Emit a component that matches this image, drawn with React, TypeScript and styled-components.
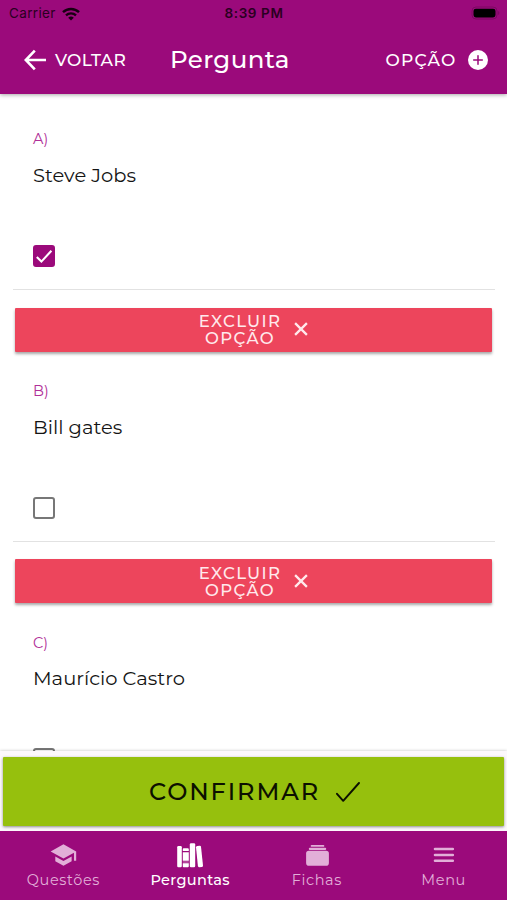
import React from 'react';
import styled, { createGlobalStyle, css } from 'styled-components';

const PURPLE = '#9b0a7b';

const GlobalStyle = createGlobalStyle`
  *, *::before, *::after { box-sizing: border-box; }
  body { margin: 0; background: #fff; }
  button { border: 0; padding: 0; background: none; font: inherit; color: inherit; }
`;

const Screen = styled.div`
  width: 507px;
  height: 900px;
  overflow: hidden;
  display: flex;
  flex-direction: column;
  background: #fff;
  color: #141414;
  font-family: Montserrat, Inter, sans-serif;
`;

const Header = styled.header`
  flex: none;
  height: 94px;
  background: ${PURPLE};
  box-shadow: 0 1px 4px rgba(0, 0, 0, 0.35);
  z-index: 1;
`;

const StatusBar = styled.div`
  display: grid;
  grid-template-columns: 1fr auto 1fr;
  align-items: center;
  height: 27px;
  padding: 0 7px 0 9px;
  color: #2a0021;
  font: 400 13.5px/27px Inter, sans-serif;
`;

const Carrier = styled.div`
  display: flex;
  align-items: center;
  gap: 6px;
  letter-spacing: 0.35px;
`;

const Clock = styled.div`
  margin-right: 1px;
  font-weight: 600;
  font-size: 13.5px;
  letter-spacing: 0.6px;
`;

const BatteryIcon = styled.svg`
  justify-self: end;
  margin-top: -1px;
`;

const Toolbar = styled.div`
  display: grid;
  grid-template-columns: 170px 1fr auto;
  align-items: center;
  height: 65px;
  padding-right: 19px;
  color: #fff;
`;

const BarButton = styled.button<{ $gap: number; $indent?: number; $track: number }>`
  display: flex;
  align-items: center;
  gap: ${({ $gap }) => $gap}px;
  padding-left: ${({ $indent = 0 }) => $indent}px;
  font-size: 17px;
  font-weight: 500;
  letter-spacing: ${({ $track }) => $track}px;
`;

const Title = styled.h1`
  margin: 0 0 2px;
  font-size: 24.5px;
  font-weight: 500;
  line-height: 30px;
  letter-spacing: 0.4px;
`;

const Content = styled.main`
  flex: none;
  height: 657px;
  padding: 30px 12px 0 13px;
  overflow: hidden;
`;

const Option = styled.section`
  height: 251.7px;
`;

const Field = styled.div`
  height: 166px;
  padding: 6.3px 20px 0;
  border-bottom: 1.5px solid #e2e2e2;
`;

const Letter = styled.div`
  height: 18px;
  line-height: 18px;
  font-size: 14.5px;
  color: #b02f98;
`;

const Answer = styled.div`
  height: 28px;
  margin: 12.7px 0 56px;
  line-height: 28px;
  font-size: 19.5px;
`;

const Checkbox = styled.div<{ $checked: boolean }>`
  display: flex;
  width: 22px;
  height: 22px;
  border: 2px solid #777;
  border-radius: 3px;
  ${({ $checked }) => $checked && css`
    border-color: ${PURPLE};
    background: ${PURPLE};
  `}
`;

const DeleteButton = styled.button`
  display: flex;
  align-items: center;
  justify-content: center;
  gap: 13px;
  width: 477px;
  height: 44px;
  margin: 17.5px 0 0 2px;
  padding-top: 1px;
  border-radius: 1px;
  background: #ed455c;
  color: #ffe9ec;
  box-shadow: 0 2px 3px rgba(0, 0, 0, 0.35);
  font-size: 16.5px;
  font-weight: 500;
  line-height: 17px;
  letter-spacing: 1.35px;
  svg { margin-bottom: 2px; }
`;

const Footer = styled.footer`
  position: relative;
  flex: none;
  height: 80px;
  padding: 6px 3px 0;
  background: #fcf8fc;
  box-shadow: 0 0 3px rgba(0, 0, 0, 0.25);
`;

const ConfirmButton = styled.button`
  display: flex;
  align-items: center;
  gap: 16px;
  width: 501px;
  height: 69px;
  padding-left: 146px;
  border-radius: 1px;
  background: #96c00d;
  color: #0c1000;
  box-shadow: 0 1px 3px rgba(0, 0, 0, 0.45);
  font-size: 24px;
  font-weight: 500;
  letter-spacing: 1.9px;
`;

const TabBar = styled.nav`
  position: relative;
  flex: 1;
  display: grid;
  grid-template-columns: repeat(4, 1fr);
  background: ${PURPLE};
`;

const Tab = styled.button<{ $active?: boolean }>`
  display: flex;
  flex-direction: column;
  align-items: center;
  padding-top: 10px;
  color: ${({ $active }) => ($active ? '#fff' : '#e2afd8')};
  font-size: 14.5px;
  line-height: 20px;
  font-weight: ${({ $active }) => ($active ? 500 : 400)};
  letter-spacing: ${({ $active }) => ($active ? 0.35 : 0.6)}px;
`;

const TabIcon = styled.svg`
  width: 28px;
  height: 28px;
  margin-bottom: 1px;
  fill: currentColor;
`;

const WifiIcon = () => (
  <svg width="18" height="14" viewBox="0 0 18 14" fill="none" stroke="#170011">
    <path d="M1 5.2a11.5 11.5 0 0 1 16 0" strokeWidth="2.4" />
    <path d="M4 8.4a7.2 7.2 0 0 1 10 0" strokeWidth="2.3" />
    <path d="M9 13.6 6.2 10.7a4.1 4.1 0 0 1 5.6 0z" fill="#170011" stroke="none" />
  </svg>
);

const Battery = () => (
  <BatteryIcon width="29" height="14" viewBox="0 0 29 14">
    <rect x="1" y="1" width="25" height="12" rx="4" fill="none" stroke="#7c0863" />
    <rect x="2.5" y="2.7" width="22" height="8.8" rx="2.4" fill="#000" />
    <path d="M27.2 5v4c1.6-.8 1.6-3.2 0-4z" fill="#7c0863" />
  </BatteryIcon>
);

const BackIcon = () => (
  <svg width="22" height="22" viewBox="0 0 22 22" fill="none" stroke="currentColor" strokeWidth="2.6">
    <path d="M10.8 1.6 1.8 11l9 9.4M2 11h20" />
  </svg>
);

const AddIcon = () => (
  <svg width="20" height="20" viewBox="0 0 20 20">
    <circle cx="10" cy="10" r="10" fill="#fff" />
    <path d="M10 5.7v8.6M5.7 10h8.6" stroke={PURPLE} strokeWidth="1.5" strokeLinecap="round" />
  </svg>
);

const CloseIcon = () => (
  <svg width="14" height="14" viewBox="0 0 14 14" stroke="currentColor" strokeWidth="2.3">
    <path d="m1.1 1.1 11.8 11.8M12.9 1.1 1.1 12.9" />
  </svg>
);

const ConfirmIcon = () => (
  <svg width="24" height="20" viewBox="0 0 24 20" fill="none" stroke="currentColor" strokeWidth="1.9" strokeLinecap="round" strokeLinejoin="round">
    <path d="m1 11.8 6.2 7L23 1" />
  </svg>
);

const CheckIcon = () => (
  <svg width="18" height="18" viewBox="0 0 18 18" fill="none" stroke="#fff" strokeWidth="2.1">
    <path d="m1.8 10 4.6 4.6L16.4 3.8" />
  </svg>
);

const SchoolIcon = () => (
  <TabIcon viewBox="0 0 24 24">
    <path d="M5.4 13.2v4.1L12.4 21.2l7-3.9v-4.1l-7 3.9zM12.4 2.7 1.4 9l11 6 9-4.9V17h1.9V9z" />
  </TabIcon>
);

const BooksIcon = () => (
  <TabIcon viewBox="0 0 28 28">
    <rect x="1.2" y="5" width="4.6" height="21.2" rx="1.2" />
    <path d="M8 7.3h3.8a1 1 0 0 1 1 1v1.8H6.8V8.3a1 1 0 0 1 1.2-1zM6.8 11.2h6v8.6h-6zM6.8 22.2h6v3a1 1 0 0 1-1 1H8a1 1 0 0 1-1.2-1zM6.8 20.7h6v.6h-6z" />
    <rect x="13.8" y="2.3" width="5.4" height="23.9" rx="1.2" />
    <path d="m21.2 5 2.5-.3q1.1-.1 1.3 1l2 18.8q.1 1.2-1 1.4l-2.8.3q-1.1.1-1.3-1.1L20 6.3q-.1-1.1 1.2-1.3z" />
  </TabIcon>
);

const CardsIcon = () => (
  <TabIcon viewBox="0 0 28 28">
    <rect x="7.7" y="3.9" width="13.6" height="1.9" rx="0.9" />
    <rect x="5.8" y="6.8" width="17.4" height="2.2" rx="1" />
    <rect x="3.1" y="9.7" width="22.8" height="15" rx="2.8" />
  </TabIcon>
);

const MenuIcon = () => (
  <TabIcon viewBox="0 0 28 28" stroke="currentColor" strokeWidth="2.6" strokeLinecap="round">
    <path d="M5 8h17.8M5 14h17.8M5 19.8h17.8" />
  </TabIcon>
);

const options = [
  { letter: 'A)', answer: 'Steve Jobs', checked: true, removable: true },
  { letter: 'B)', answer: 'Bill gates', checked: false, removable: true },
  { letter: 'C)', answer: 'Maurício Castro', checked: false, removable: false },
];

export default function App() {
  return (
    <Screen>
      <GlobalStyle />
      <Header>
        <StatusBar>
          <Carrier>Carrier <WifiIcon /></Carrier>
          <Clock>8:39 PM</Clock>
          <Battery />
        </StatusBar>
        <Toolbar>
          <BarButton $gap={9} $indent={24} $track={0.35}><BackIcon />VOLTAR</BarButton>
          <Title>Pergunta</Title>
          <BarButton $gap={11.5} $track={1.2}>OPÇÃO<AddIcon /></BarButton>
        </Toolbar>
      </Header>
      <Content>
        {options.map((o) => (
          <Option key={o.letter}>
            <Field>
              <Letter>{o.letter}</Letter>
              <Answer>{o.answer}</Answer>
              <Checkbox $checked={o.checked}>{o.checked && <CheckIcon />}</Checkbox>
            </Field>
            {o.removable && (
              <DeleteButton>
                <span>EXCLUIR<br />OPÇÃO</span>
                <CloseIcon />
              </DeleteButton>
            )}
          </Option>
        ))}
      </Content>
      <Footer>
        <ConfirmButton>CONFIRMAR<ConfirmIcon /></ConfirmButton>
      </Footer>
      <TabBar>
        <Tab><SchoolIcon />Questões</Tab>
        <Tab $active><BooksIcon />Perguntas</Tab>
        <Tab><CardsIcon />Fichas</Tab>
        <Tab><MenuIcon />Menu</Tab>
      </TabBar>
    </Screen>
  );
}
